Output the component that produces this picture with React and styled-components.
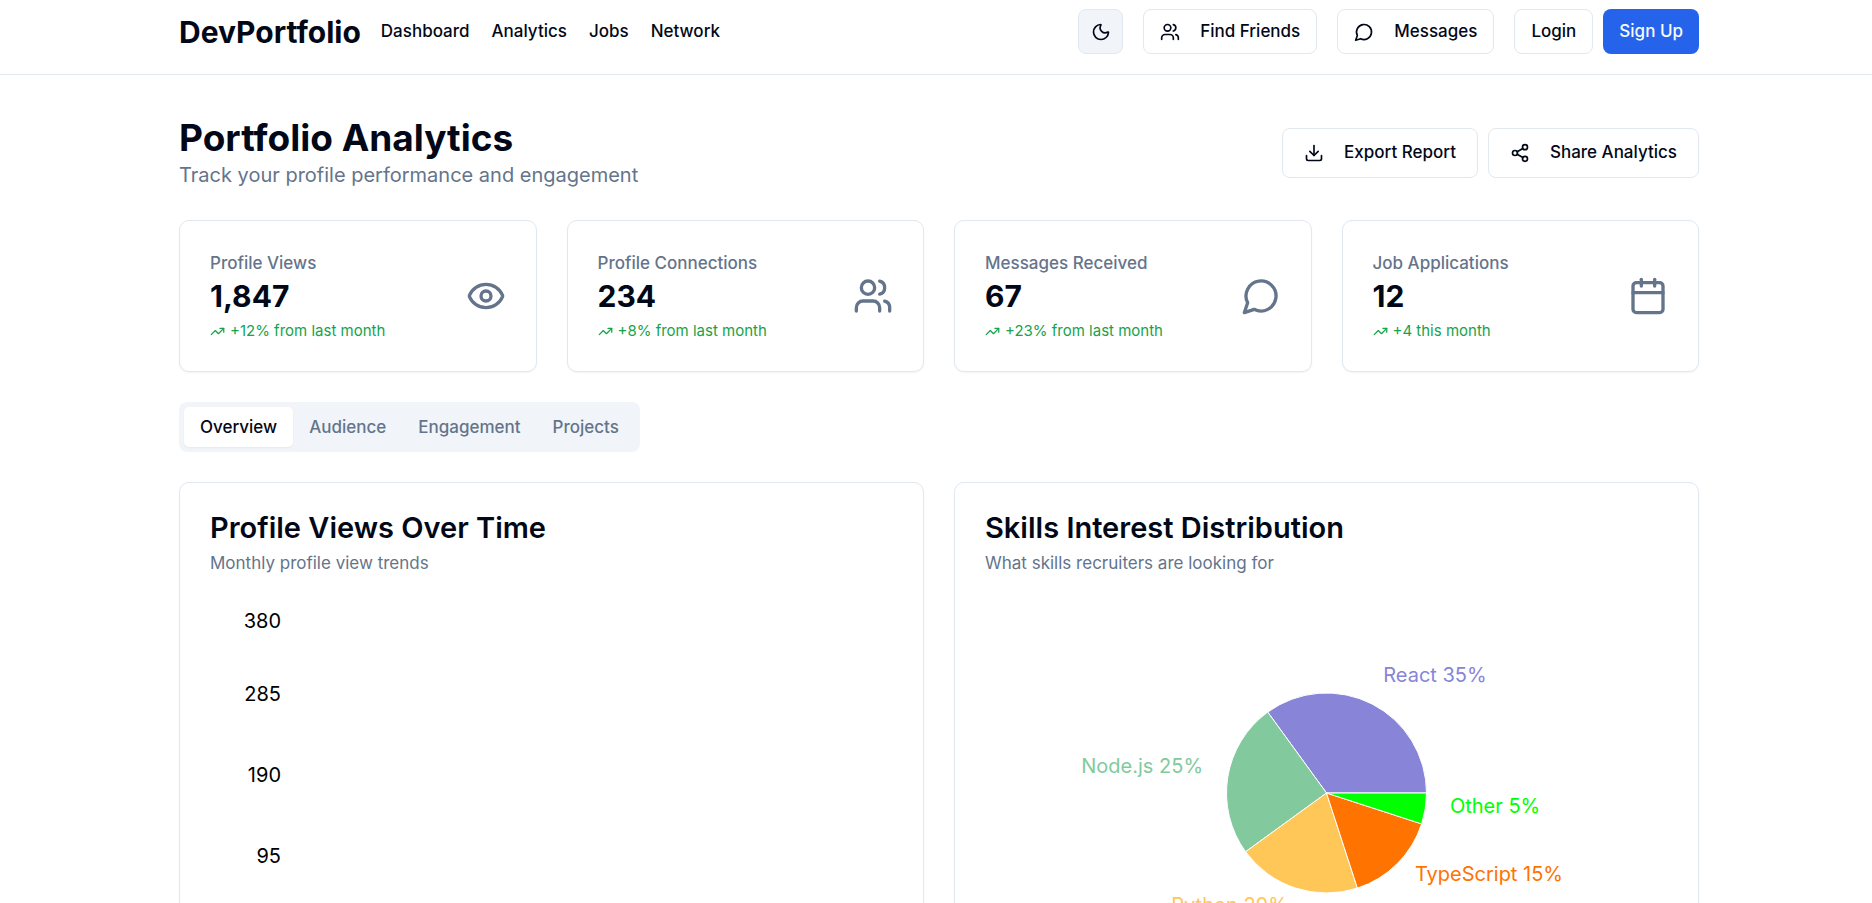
import React, { useState } from "react";
import styled, { createGlobalStyle, css } from "styled-components";
import {
  Moon,
  Users,
  Download,
  Share2,
  Eye,
  Calendar,
  TrendingUp,
} from "lucide-react";

const color = {
  text: "#020817",
  muted: "#64748b",
  border: "#e2e8f0",
  soft: "#f1f5f9",
  primary: "#2563eb",
  onPrimary: "#f8fafc",
  positive: "#16a34a",
};

const GlobalStyle = createGlobalStyle`
  *, *::before, *::after { box-sizing: border-box; }
  body {
    margin: 0;
    background: #ffffff;
    color: ${color.text};
    font-family: Inter, "Liberation Sans", sans-serif;
    font-size: 20px;
    line-height: 30px;
  }
  h1, h2, p { margin: 0; }
  button { font: inherit; color: inherit; cursor: pointer; }
  svg { flex-shrink: 0; }
`;

const Container = styled.div`
  max-width: 1526px;
  margin: 0 auto;
  padding-left: 6px;
`;

const Header = styled.header`
  border-bottom: 1px solid ${color.border};
`;

const HeaderBar = styled(Container)`
  display: flex;
  align-items: center;
  justify-content: space-between;
  padding-top: 9px;
  padding-bottom: 20px;
`;

const Group = styled.div`
  display: flex;
  align-items: center;
  gap: ${({ $gap }) => $gap}px;
`;

const Brand = styled.a`
  font-size: 30px;
  line-height: 40px;
  font-weight: 700;
  color: inherit;
  text-decoration: none;
`;

const Nav = styled.nav`
  display: flex;
  gap: 22px;
`;

const NavLink = styled.a`
  font-size: 17px;
  line-height: 25px;
  font-weight: 500;
  color: inherit;
  text-decoration: none;
`;

const Button = styled.button`
  display: inline-flex;
  align-items: center;
  justify-content: center;
  gap: 20px;
  height: ${({ $large }) => ($large ? 50 : 45)}px;
  padding: 0 ${({ $large }) => ($large ? 21 : 16)}px;
  border: 1px solid ${color.border};
  border-radius: 8px;
  background: #ffffff;
  font-size: 17px;
  line-height: 25px;
  font-weight: 500;
  white-space: nowrap;

  ${({ $variant }) =>
    $variant === "icon" &&
    css`
      width: 45px;
      padding: 0;
      background: ${color.soft};
    `}
  ${({ $variant }) =>
    $variant === "primary" &&
    css`
      border: 0;
      background: ${color.primary};
      color: ${color.onPrimary};
    `}
`;

const Page = styled(Container).attrs({ as: "main" })`
  display: grid;
  gap: 30px;
  padding-top: 40px;
  padding-bottom: 40px;
`;

const PageHead = styled.div`
  display: flex;
  align-items: center;
  justify-content: space-between;
`;

const Title = styled.h1`
  font-size: 37px;
  line-height: 45px;
  font-weight: 700;
`;

const Subtitle = styled.p`
  color: ${color.muted};
`;

const Card = styled.section`
  border: 1px solid ${color.border};
  border-radius: 10px;
  background: #ffffff;
  box-shadow: 0 1px 2px rgba(0, 0, 0, 0.05);
  padding: 30px;
`;

const StatGrid = styled.div`
  display: grid;
  grid-template-columns: repeat(4, minmax(0, 1fr));
  gap: 30px;
`;

const StatCard = styled(Card)`
  display: flex;
  align-items: center;
  justify-content: space-between;
`;

const StatLabel = styled.p`
  font-size: 17px;
  line-height: 25px;
  font-weight: 500;
  color: ${color.muted};
`;

const StatValue = styled.p`
  font-size: 30px;
  line-height: 40px;
  font-weight: 700;
`;

const StatTrend = styled.p`
  display: flex;
  align-items: center;
  gap: 5px;
  margin-top: 5px;
  font-size: 15px;
  line-height: 20px;
  color: ${color.positive};
`;

const TabList = styled.div`
  display: flex;
  justify-self: start;
  padding: 5px;
  border-radius: 8px;
  background: ${color.soft};
`;

const Tab = styled.button`
  height: 40px;
  padding: 0 16px;
  border: 0;
  border-radius: 5px;
  font-size: 17px;
  line-height: 25px;
  font-weight: 500;
  background: ${({ $active }) => ($active ? "#ffffff" : "transparent")};
  color: ${({ $active }) => ($active ? color.text : color.muted)};
  box-shadow: ${({ $active }) =>
    $active ? "0 1px 2px rgba(0, 0, 0, 0.05)" : "none"};
`;

const ChartGrid = styled.div`
  display: grid;
  grid-template-columns: repeat(2, minmax(0, 1fr));
  gap: 30px;
`;

const ChartTitle = styled.h2`
  font-size: 29px;
  line-height: 30px;
  font-weight: 600;
`;

const ChartNote = styled.p`
  margin: 8px 0 29px;
  font-size: 17px;
  line-height: 25px;
  color: ${color.muted};
`;

const ChartArea = styled.svg`
  display: block;
  width: 100%;
  height: 375px;
  font-size: 20px;
`;

function MessageIcon({ size, color: stroke = "currentColor" }) {
  return (
    <svg
      width={size}
      height={size}
      viewBox="0 0 24 24"
      fill="none"
      stroke={stroke}
      strokeWidth="2"
      strokeLinecap="round"
      strokeLinejoin="round"
      aria-hidden="true"
    >
      <path d="M7.9 20A9 9 0 1 0 4 16.1L2 22Z" />
    </svg>
  );
}

const stats = [
  { label: "Profile Views", value: "1,847", trend: "+12% from last month", Icon: Eye },
  { label: "Profile Connections", value: "234", trend: "+8% from last month", Icon: Users },
  { label: "Messages Received", value: "67", trend: "+23% from last month", Icon: MessageIcon },
  { label: "Job Applications", value: "12", trend: "+4 this month", Icon: Calendar },
];

const ticks = [
  { value: 380, y: 23 },
  { value: 285, y: 96 },
  { value: 190, y: 177 },
  { value: 95, y: 258 },
];

const skills = [
  { name: "React", share: 35, fill: "#8884d8" },
  { name: "Node.js", share: 25, fill: "#82ca9d" },
  { name: "Python", share: 20, fill: "#ffc658" },
  { name: "TypeScript", share: 15, fill: "#ff7300" },
  { name: "Other", share: 5, fill: "#00ff00" },
];

const point = (radius, percent) => {
  const angle = (percent / 100) * 2 * Math.PI;
  return [radius * Math.cos(angle), -radius * Math.sin(angle)];
};

function ViewsChart() {
  return (
    <ChartArea role="img" aria-label="Monthly profile view trends">
      {ticks.map((tick) => (
        <text key={tick.value} x="71" y={tick.y} textAnchor="end" fill="#000000">
          {tick.value}
        </text>
      ))}
    </ChartArea>
  );
}

function SkillsChart() {
  let total = 0;
  const slices = skills.map((skill) => {
    const start = total;
    total += skill.share;
    return { ...skill, start, end: total, middle: (start + total) / 2 };
  });
  return (
    <ChartArea role="img" aria-label="Skills interest distribution">
      <svg x="50%" y="188" overflow="visible">
        {slices.map((slice) => {
          const [x1, y1] = point(100, slice.start);
          const [x2, y2] = point(100, slice.end);
          return (
            <path
              key={slice.name}
              d={`M0 0L${x1} ${y1}A100 100 0 0 0 ${x2} ${y2}Z`}
              fill={slice.fill}
              stroke="#ffffff"
            />
          );
        })}
        {slices.map((slice) => {
          const [x, y] = point(125, slice.middle);
          return (
            <text
              key={slice.name}
              x={x}
              y={y}
              textAnchor={x > 0 ? "start" : "end"}
              fill={slice.fill}
            >
              {`${slice.name} ${slice.share}%`}
            </text>
          );
        })}
      </svg>
    </ChartArea>
  );
}

export default function App() {
  const [activeTab, setActiveTab] = useState("Overview");
  return (
    <>
      <GlobalStyle />
      <Header>
        <HeaderBar>
          <Group $gap={20}>
            <Brand href="#">DevPortfolio</Brand>
            <Nav>
              {["Dashboard", "Analytics", "Jobs", "Network"].map((name) => (
                <NavLink key={name} href={`#${name.toLowerCase()}`}>
                  {name}
                </NavLink>
              ))}
            </Nav>
          </Group>
          <Group $gap={20}>
            <Button $variant="icon" aria-label="Toggle theme">
              <Moon size={20} />
            </Button>
            <Button>
              <Users size={20} />
              Find Friends
            </Button>
            <Button>
              <MessageIcon size={20} />
              Messages
            </Button>
            <Group $gap={10}>
              <Button>Login</Button>
              <Button $variant="primary">Sign Up</Button>
            </Group>
          </Group>
        </HeaderBar>
      </Header>
      <Page>
        <PageHead>
          <div>
            <Title>Portfolio Analytics</Title>
            <Subtitle>Track your profile performance and engagement</Subtitle>
          </div>
          <Group $gap={10}>
            <Button $large>
              <Download size={20} />
              Export Report
            </Button>
            <Button $large>
              <Share2 size={20} />
              Share Analytics
            </Button>
          </Group>
        </PageHead>
        <StatGrid>
          {stats.map(({ label, value, trend, Icon }) => (
            <StatCard key={label}>
              <div>
                <StatLabel>{label}</StatLabel>
                <StatValue>{value}</StatValue>
                <StatTrend>
                  <TrendingUp size={15} />
                  {trend}
                </StatTrend>
              </div>
              <Icon size={40} color={color.muted} />
            </StatCard>
          ))}
        </StatGrid>
        <TabList role="tablist">
          {["Overview", "Audience", "Engagement", "Projects"].map((name) => (
            <Tab
              key={name}
              role="tab"
              aria-selected={name === activeTab}
              $active={name === activeTab}
              onClick={() => setActiveTab(name)}
            >
              {name}
            </Tab>
          ))}
        </TabList>
        <ChartGrid>
          <Card>
            <ChartTitle>Profile Views Over Time</ChartTitle>
            <ChartNote>Monthly profile view trends</ChartNote>
            <ViewsChart />
          </Card>
          <Card>
            <ChartTitle>Skills Interest Distribution</ChartTitle>
            <ChartNote>What skills recruiters are looking for</ChartNote>
            <SkillsChart />
          </Card>
        </ChartGrid>
      </Page>
    </>
  );
}
